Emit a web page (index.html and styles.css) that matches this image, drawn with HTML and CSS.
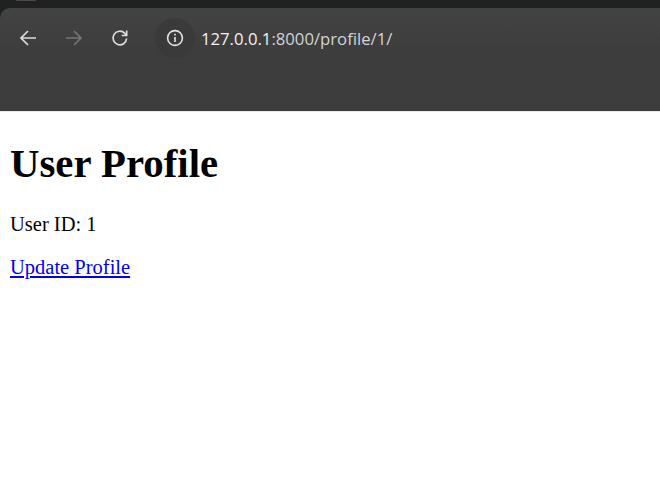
FILE: index.html
```html
<!DOCTYPE html>
<html lang="en">
<head>
    <meta charset="UTF-8">
    <meta name="viewport" content="width=device-width, initial-scale=1.0">
    <title>User Profile</title>
    <link rel="stylesheet" href="styles.css">
</head>
<body>
    <div class="tab-strip"><div class="tab-edge"></div></div>
    <div class="toolbar">
        <div class="nav-row">
            <svg class="nav-icon" viewBox="0 0 18 18"><path d="M17 9H2.5M9 2 2 9l7 7"/></svg>
            <svg class="nav-icon nav-icon-off" viewBox="0 0 18 18"><path d="M1 9h14.5M9 2l7 7-7 7"/></svg>
            <svg class="nav-icon" viewBox="0 0 18 18"><path d="M15.6 9.5a6.8 6.8 0 1 1-1.8-5.1L15.7 6.5M15.7 1.5v5h-5"/></svg>
            <div class="omnibox">
                <div class="info-chip">
                    <svg class="info-icon" viewBox="0 0 18 18">
                        <circle cx="9" cy="9" r="7.4"/>
                        <path d="M9 8v5M9 4.8v1.8"/>
                    </svg>
                </div>
                <span class="url"><span class="url-host">127.0.0.1</span>:8000/profile/1/</span>
            </div>
        </div>
    </div>
    <div class="page">
        <h1>User Profile</h1>
        <p>User ID: 1</p>
        <p><a href="#">Update Profile</a></p>
    </div>
</body>
</html>
```

FILE: styles.css
```css
body {
    margin: 0;
    background: #fff;
    font-family: "Liberation Serif", serif;
    overflow: hidden;
}

.tab-strip {
    height: 8px;
    background: #202222;
}

.tab-edge {
    width: 20px;
    height: 1px;
    margin-left: 16px;
    background: #4a4a4a;
    border-radius: 0 0 8px 8px;
}

.toolbar {
    height: 104px;
    background: #202222;
}

.nav-row {
    height: 104px;
    box-sizing: border-box;
    padding: 9px 0 0 19px;
    display: flex;
    align-items: flex-start;
    background: linear-gradient(#434343, #3d3d3d 40%);
    border-radius: 10px 0 0 0;
    border-bottom: 1px solid #e9e9e9;
}

.nav-icon {
    width: 18px;
    height: 18px;
    margin-top: 12px;
    margin-right: 28px;
    fill: none;
    stroke: #dcdcdc;
    stroke-width: 1.7;
}

.nav-icon-off {
    stroke: #757575;
}

.omnibox {
    display: flex;
    align-items: center;
    margin-left: -2px;
    height: 42px;
}

.info-chip {
    width: 40px;
    height: 40px;
    border-radius: 50%;
    background: #3a3a3a;
    display: flex;
    align-items: center;
    justify-content: center;
}

.info-icon {
    width: 18px;
    height: 18px;
    fill: none;
    stroke: #e4e4e4;
    stroke-width: 1.6;
}

.url {
    margin-left: 6px;
    font-family: "Open Sans", sans-serif;
    font-size: 16.7px;
    color: #d2d4d3;
}

.url-host {
    color: #f1f1f1;
}

.page {
    padding: 0 10px;
}

h1 {
    font-size: 40.8px;
    margin: 28px 0 0;
    line-height: 47px;
}

p {
    font-size: 20.5px;
    line-height: 23px;
    margin: 26px 0 0;
}

p + p {
    margin-top: 20px;
}
```
